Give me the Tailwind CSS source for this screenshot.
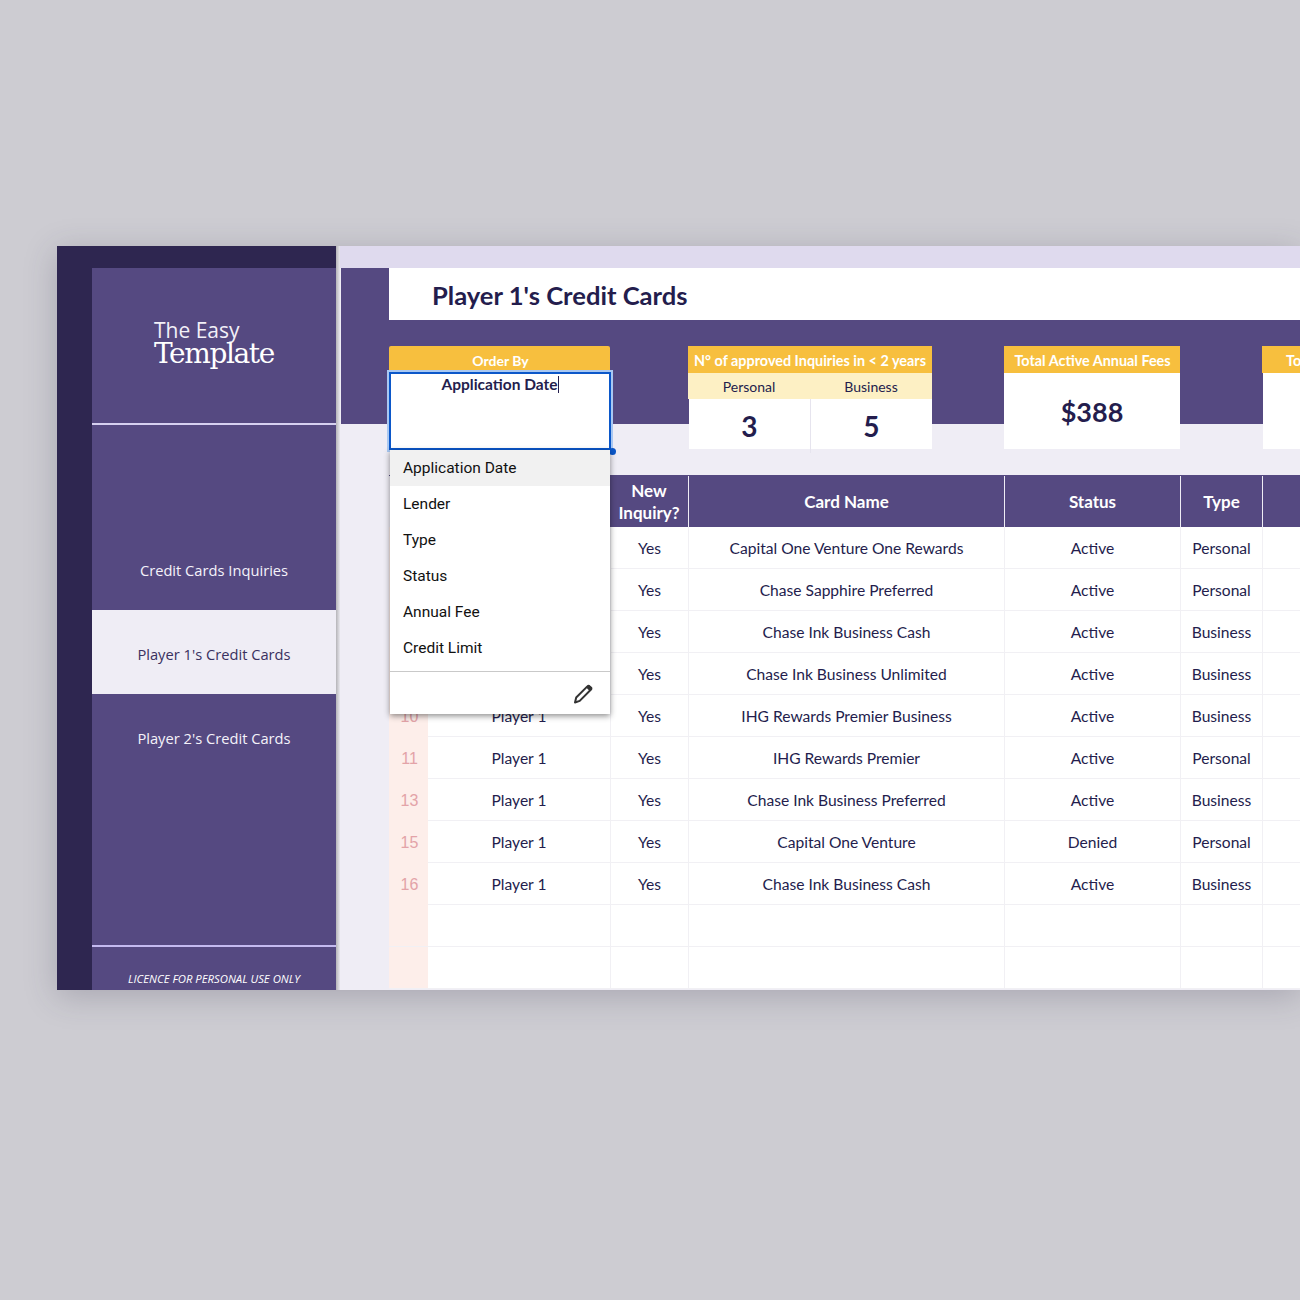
<!DOCTYPE html>
<html lang="en">
<head>
    <meta charset="UTF-8">
    <meta name="viewport" content="width=device-width, initial-scale=1.0">
    <title>Player 1's Credit Cards</title>
    <script src="https://cdn.jsdelivr.net/npm/@tailwindcss/browser@4"></script>
</head>
<body class="w-[1300px] h-[1300px] overflow-hidden bg-[#cdccd2] pt-[246px] pl-[57px] font-['Lato',sans-serif]">
    <div class="flex w-[1243px] h-[744px] overflow-hidden bg-[#d4d3d8] shadow-[0_6px_30px_rgba(60,55,80,0.25)]">

        <!-- Sidebar -->
        <aside class="w-[279px] h-full shrink-0 bg-[#2e2650] pt-[22px] pl-[35px]">
            <div class="flex flex-col h-full bg-[#554981] text-white font-['Open_Sans',sans-serif]">
                <div class="h-[157px] shrink-0 border-b-2 border-[#d6d0f0] pl-[62px] pt-[49px]">
                    <div class="text-[21px] leading-[26px] text-[#f2f0f8]">The Easy</div>
                    <div class="-mt-[6px] text-[28px] leading-[34px] font-['DejaVu_Serif',serif] tracking-[-1.4px]">Template</div>
                </div>
                <nav class="mt-[103px] text-[14.7px] text-center">
                    <div class="h-[82px] flex items-center justify-center pt-[2px] text-[#f4f2fa]">Credit Cards Inquiries</div>
                    <div class="h-[84px] flex items-center justify-center pt-[4px] bg-[#efedf5] text-[#3a3160]">Player 1's Credit Cards</div>
                    <div class="h-[84px] flex items-center justify-center pt-[4px] text-[#f4f2fa]">Player 2's Credit Cards</div>
                </nav>
                <div class="mt-auto h-[45px] shrink-0 border-t-2 border-[#c4baf0] pt-[24px] text-center text-[11.3px] leading-[16px] italic">LICENCE FOR PERSONAL USE ONLY</div>
            </div>
        </aside>
        <div class="w-[4px] h-full shrink-0 bg-linear-to-r from-[#b5b4b8] to-[#e9e8ee]"></div>

        <!-- Main sheet -->
        <main class="relative w-[960px] h-full shrink-0 bg-[#efedf5] font-['Lato',sans-serif]">
            <div class="h-[22px] bg-[#dfdaee]"></div>
            <div class="h-[156px] bg-[#554981] ml-px">
                <div class="ml-[48px] h-[52px] bg-white pl-[43px] flex items-center pt-[2px]">
                    <h1 class="text-[25.6px] font-bold text-[#241d4d]">Player 1's Credit Cards</h1>
                </div>
            </div>

            <!-- Summary cards -->
            <div class="flex ml-[49px] -mt-[78px] h-[103px] text-[#241d4d]">
                <div class="w-[221px] shrink-0">
                    <div class="h-[26px] rounded-t-[2px] bg-[#f7bf3e] text-white text-[14px] font-bold flex items-center justify-center pt-[3px] pl-[2px]">Order By</div>
                </div>
                <div class="ml-[78px] w-[244px] shrink-0 flex flex-col">
                    <div class="h-[27px] shrink-0 bg-[#f7bf3e] text-white text-[14.4px] font-bold flex items-center justify-center pt-[3px] whitespace-nowrap">N° of approved Inquiries in &lt; 2 years</div>
                    <div class="grid grid-cols-2 h-[26px] shrink-0 bg-[#fdf0c4] text-[14px] text-center leading-[28px]">
                        <div>Personal</div>
                        <div>Business</div>
                    </div>
                    <div class="grid grid-cols-2 h-[50px] shrink-0 bg-white ml-px text-[28px] font-bold text-center leading-[54px]">
                        <div class="border-r border-[#e6e4ee]">3</div>
                        <div>5</div>
                    </div>
                </div>
                <div class="ml-[72px] w-[176px] shrink-0 flex flex-col">
                    <div class="h-[27px] shrink-0 bg-[#f7bf3e] text-white text-[14.4px] font-bold flex items-center justify-center pt-[2px] pl-px whitespace-nowrap">Total Active Annual Fees</div>
                    <div class="h-[76px] shrink-0 bg-white text-[27px] font-bold text-center leading-[78px]">$388</div>
                </div>
                <div class="ml-[82px] w-[60px] shrink-0 flex flex-col">
                    <div class="h-[27px] shrink-0 bg-[#f7bf3e] text-white text-[14.4px] font-bold flex items-center pl-[24px] pt-[2px]">To</div>
                    <div class="flex-1 bg-white ml-px"></div>
                </div>
            </div>

            <!-- Table -->
            <div class="ml-[49px] mt-[26px] w-[911px]">
                <div class="grid grid-cols-[39px_182px_78px_316px_176px_82px_38px] h-[52px] bg-[#554981] text-white text-[17px] font-bold text-center leading-[22px] pt-px">
                    <div class="bg-[#efedf5]"></div>
                    <div></div>
                    <div class="flex items-center justify-center">New<br>Inquiry?</div>
                    <div class="flex items-center justify-center border-l border-[#efedf5]">Card Name</div>
                    <div class="flex items-center justify-center border-l border-[#efedf5]">Status</div>
                    <div class="flex items-center justify-center border-l border-[#efedf5]">Type</div>
                    <div class="border-l border-[#efedf5]"></div>
                </div>
                <div id="rows"></div>
            </div>

            <!-- Order By editor with its dropdown -->
            <div class="absolute left-[49px] top-[126px] w-[222px] h-[78px] bg-white border-2 border-[#0b57c9] outline-2 outline-[#a9c8f2] text-center text-[#241d4d] text-[15.5px] font-bold leading-[20px]">
                Application Date<span class="inline-block w-px h-[17px] bg-[#241d4d] align-[-3px]"></span>
            </div>
            <div class="absolute left-[269px] top-[202px] w-[7px] h-[7px] rounded-full bg-[#0b57c9]"></div>
            <div class="absolute left-[50px] top-[204px] w-[220px] h-[264px] bg-white shadow-[0_2px_6px_rgba(0,0,0,0.45)] font-['Roboto',sans-serif] text-[15.5px] text-[#111] flex flex-col">
                <div class="h-[36px] shrink-0 flex items-center px-[13px] pt-[2px] bg-[#f1f1f1]">Application Date</div>
                <div class="h-[36px] shrink-0 flex items-center px-[13px] pt-[2px]">Lender</div>
                <div class="h-[36px] shrink-0 flex items-center px-[13px] pt-[2px]">Type</div>
                <div class="h-[36px] shrink-0 flex items-center px-[13px] pt-[2px]">Status</div>
                <div class="h-[36px] shrink-0 flex items-center px-[13px] pt-[2px]">Annual Fee</div>
                <div class="h-[36px] shrink-0 flex items-center px-[13px] pt-[2px]">Credit Limit</div>
                <div class="flex-1 mt-[5px] border-t border-[#c9c9c9] flex items-center justify-end pr-[16px] pt-px">
                    <svg class="w-[22px] h-[22px]" viewBox="0 0 22 22" fill="none" stroke="#333" stroke-width="2" stroke-linejoin="round">
                        <path d="M3 19.5l1.2-5L15.6 3.1a1.3 1.3 0 0 1 1.9 0l1.5 1.5a1.3 1.3 0 0 1 0 1.9L7.7 17.9z"/>
                        <path d="M15.4 3.4l3.4 3.4" stroke-width="3.4"/>
                    </svg>
                </div>
            </div>
        </main>
    </div>

    <script>
        // Rows of the sheet, the first ones sit behind the dropdown
        const rows = [
            ['', '', 'Yes', 'Capital One Venture One Rewards', 'Active', 'Personal'],
            ['', '', 'Yes', 'Chase Sapphire Preferred', 'Active', 'Personal'],
            ['', '', 'Yes', 'Chase Ink Business Cash', 'Active', 'Business'],
            ['', '', 'Yes', 'Chase Ink Business Unlimited', 'Active', 'Business'],
            ['10', 'Player 1', 'Yes', 'IHG Rewards Premier Business', 'Active', 'Business'],
            ['11', 'Player 1', 'Yes', 'IHG Rewards Premier', 'Active', 'Personal'],
            ['13', 'Player 1', 'Yes', 'Chase Ink Business Preferred', 'Active', 'Business'],
            ['15', 'Player 1', 'Yes', 'Capital One Venture', 'Denied', 'Personal'],
            ['16', 'Player 1', 'Yes', 'Chase Ink Business Cash', 'Active', 'Business'],
            ['', '', '', '', '', ''],
            ['', '', '', '', '', '']
        ];
        const body = document.getElementById('rows');
        rows.forEach((r) => {
            const row = document.createElement('div');
            row.className = 'grid grid-cols-[39px_182px_78px_316px_176px_82px_38px] h-[42px] bg-white border-b border-[#f1f0f4] text-[15.6px] text-[#241d4d] text-center leading-[43px]';
            row.innerHTML = `
                <div class="bg-[#fdeeea] text-[#e3a3a8] text-[16px] pl-[2px] font-['Liberation_Sans',sans-serif]">${r[0]}</div>
                <div>${r[1]}</div>
                <div class="border-l border-[#f1f0f4]">${r[2]}</div>
                <div class="border-l border-[#f1f0f4]">${r[3]}</div>
                <div class="border-l border-[#f1f0f4]">${r[4]}</div>
                <div class="border-l border-[#f1f0f4]">${r[5]}</div>
                <div class="border-l border-[#f1f0f4]"></div>
            `;
            body.appendChild(row);
        });
    </script>
</body>
</html>
